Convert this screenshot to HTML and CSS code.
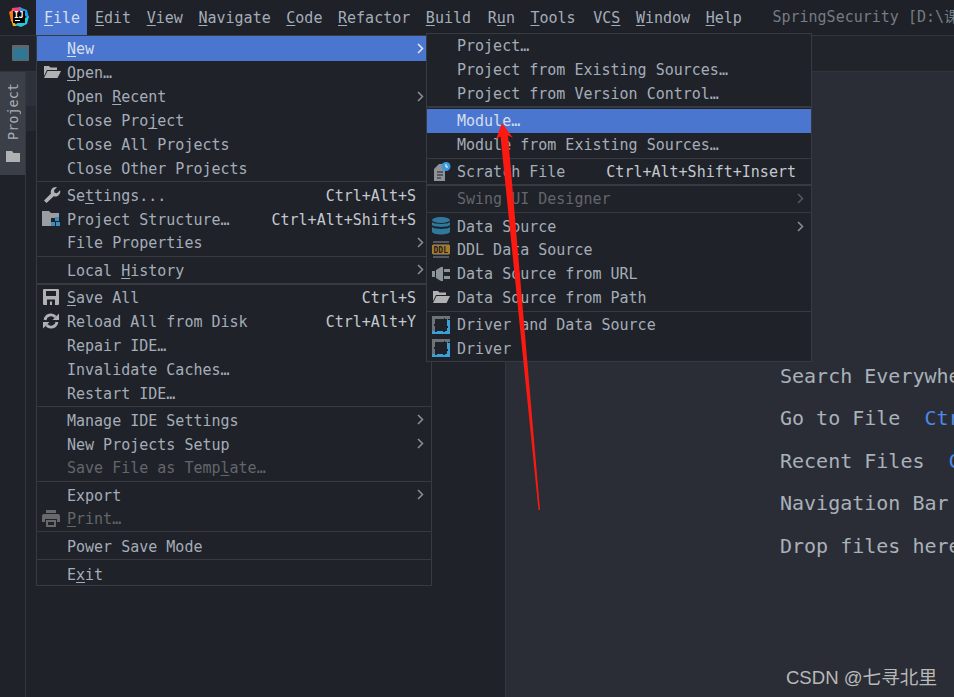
FILE: index.html
```html
<!DOCTYPE html>
<html lang="en">
<head>
<meta charset="utf-8">
<title>SpringSecurity</title>
<link rel="stylesheet" href="styles.css">
</head>
<body>
<div class="app">
  <header class="menubar">
    <div class="logo">
      <svg width="20" height="20" viewBox="0 0 20 20">
        <polygon points="3,1 12,0 12,6 2,9" fill="#fc3a84"/>
        <polygon points="10,0 18,3 20,11 14,8" fill="#1c9ee6"/>
        <polygon points="0,5 5,2 7,16 2,14" fill="#f97a12"/>
        <polygon points="2,12 8,19 4,19" fill="#fdb60d"/>
        <polygon points="14,12 20,9 18,17 12,20 6,18" fill="#28c8dc"/>
        <rect x="4" y="4" width="12" height="12" fill="#000"/>
        <rect x="6" y="13" width="5" height="1" fill="#fff"/>
      </svg>
      <span class="logo-text">IJ</span>
    </div>
    <nav class="menus">
      <span class="menu active"><u>F</u>ile</span>
      <span class="menu"><u>E</u>dit</span>
      <span class="menu"><u>V</u>iew</span>
      <span class="menu"><u>N</u>avigate</span>
      <span class="menu"><u>C</u>ode</span>
      <span class="menu"><u>R</u>efactor</span>
      <span class="menu wide"><u>B</u>uild</span>
      <span class="menu">R<u>u</u>n</span>
      <span class="menu wider"><u>T</u>ools</span>
      <span class="menu"><span>VC<u>S</u></span></span>
      <span class="menu"><u>W</u>indow</span>
      <span class="menu"><u>H</u>elp</span>
    </nav>
    <span class="title">SpringSecurity [D:\课程</span>
  </header>

  <div class="toolbar">
    <svg class="tool-icon" width="17" height="16" viewBox="0 0 17 16">
      <rect x="0" y="0" width="17" height="16" rx="1" fill="#5c676e"/>
      <rect x="1.500" y="3.500" width="14" height="11" fill="#2f7895"/>
    </svg>
  </div>

  <div class="main">
    <aside class="strip">
      <div class="tab">
        <span class="tab-label">Project</span>
        <svg width="14" height="11" viewBox="0 0 14 11"><path d="M0 0h6l1.500 2H14v9H0z" fill="#afb1b3"/></svg>
      </div>
    </aside>
    <section class="panel">
      <div class="patch-a"></div>
      <div class="patch-b"></div>
    </section>
    <section class="editor">
      <p class="hint">Search Everywhere</p>
      <p class="hint">Go to File  <span class="key">Ctrl+Shift+N</span></p>
      <p class="hint">Recent Files  <span class="key">Ctrl+E</span></p>
      <p class="hint">Navigation Bar  <span class="key">Alt+Home</span></p>
      <p class="hint">Drop files here to open them</p>
      <div class="watermark">CSDN @七寻北里</div>
    </section>
  </div>

  <div class="popup file-menu">
    <div class="item selected"><span class="ico"></span><span class="label"><u>N</u>ew</span><svg class="chev" width="7" height="11" viewBox="0 0 7 11"><path d="M1 1l4.500 4.500L1 10" fill="none" stroke="#e4e9f2" stroke-width="1.500"/></svg></div>
    <div class="item"><span class="ico"><svg width="18" height="14" viewBox="0 0 18 14"><path d="M1 1h5l1.500 1.500H14V5H4L1 11zM4.500 6H18l-3.500 7H1z" fill="#afb1b3"/></svg></span><span class="label"><u>O</u>pen…</span></div>
    <div class="item"><span class="ico"></span><span class="label">Open <u>R</u>ecent</span><svg class="chev" width="7" height="11" viewBox="0 0 7 11"><path d="M1 1l4.500 4.500L1 10" fill="none" stroke="#8b8e93" stroke-width="1.500"/></svg></div>
    <div class="item"><span class="ico"></span><span class="label">Close Pro<u>j</u>ect</span></div>
    <div class="item"><span class="ico"></span><span class="label">Close All Projects</span></div>
    <div class="item"><span class="ico"></span><span class="label">Close Other Projects</span></div>
    <div class="sep"></div>
    <div class="item"><span class="ico"><svg width="18" height="18" viewBox="0 0 18 18"><path d="M1 14.500L8 7.500C7 4.500 9 1 13 1l1 .300-3 3 .500 2.500 2.500.500 3-3 .300 1c0 4-3.500 6-6.500 5L3.500 17z" fill="#afb1b3"/></svg></span><span class="label">Se<u>t</u>tings...</span><span class="short">Ctrl+Alt+S</span></div>
    <div class="item"><span class="ico pull"><svg width="18" height="17" viewBox="0 0 18 17"><path d="M0 1h7l2 2h8v5H9v8H0z" fill="#9a9da1"/><rect x="13" y="7" width="4" height="4" fill="#3c8dc0"/><rect x="9" y="12" width="4" height="4" fill="#3c8dc0"/><rect x="14" y="12" width="4" height="4" fill="#3c8dc0"/></svg></span><span class="label">Project Structure…</span><span class="short">Ctrl+Alt+Shift+S</span></div>
    <div class="item"><span class="ico"></span><span class="label">File Properties</span><svg class="chev" width="7" height="11" viewBox="0 0 7 11"><path d="M1 1l4.500 4.500L1 10" fill="none" stroke="#8b8e93" stroke-width="1.500"/></svg></div>
    <div class="sep"></div>
    <div class="item"><span class="ico"></span><span class="label">Local <u>H</u>istory</span><svg class="chev" width="7" height="11" viewBox="0 0 7 11"><path d="M1 1l4.500 4.500L1 10" fill="none" stroke="#8b8e93" stroke-width="1.500"/></svg></div>
    <div class="sep thick"></div>
    <div class="item"><span class="ico"><svg width="16" height="16" viewBox="0 0 16 16"><path fill-rule="evenodd" d="M1 0h14a1 1 0 0 1 1 1v14a1 1 0 0 1-1 1H1a1 1 0 0 1-1-1V1a1 1 0 0 1 1-1zM3 2v5h10V2zM4 10.500V16h8v-5.500zM7 12.500h2V16H7z" fill="#afb1b3"/></svg></span><span class="label"><u>S</u>ave All</span><span class="short">Ctrl+S</span></div>
    <div class="item"><span class="ico"><svg width="16" height="16" viewBox="0 0 16 16"><path d="M2 7A6 6 0 0 1 12.500 4M14 9A6 6 0 0 1 3.500 12" fill="none" stroke="#afb1b3" stroke-width="2.800"/><path d="M9.500 7H16V.500zM6.500 9H0v6.500z" fill="#afb1b3"/></svg></span><span class="label">Reload All from Disk</span><span class="short">Ctrl+Alt+Y</span></div>
    <div class="item"><span class="ico"></span><span class="label">Repair IDE…</span></div>
    <div class="item"><span class="ico"></span><span class="label">Invalidate Caches…</span></div>
    <div class="item"><span class="ico"></span><span class="label">Restart IDE…</span></div>
    <div class="sep"></div>
    <div class="item"><span class="ico"></span><span class="label">Manage IDE Settings</span><svg class="chev" width="7" height="11" viewBox="0 0 7 11"><path d="M1 1l4.500 4.500L1 10" fill="none" stroke="#8b8e93" stroke-width="1.500"/></svg></div>
    <div class="item"><span class="ico"></span><span class="label">New Projects Setup</span><svg class="chev" width="7" height="11" viewBox="0 0 7 11"><path d="M1 1l4.500 4.500L1 10" fill="none" stroke="#8b8e93" stroke-width="1.500"/></svg></div>
    <div class="item off"><span class="ico"></span><span class="label">Save File as Temp<u>l</u>ate…</span></div>
    <div class="sep"></div>
    <div class="item"><span class="ico"></span><span class="label">Export</span><svg class="chev" width="7" height="11" viewBox="0 0 7 11"><path d="M1 1l4.500 4.500L1 10" fill="none" stroke="#8b8e93" stroke-width="1.500"/></svg></div>
    <div class="item off"><span class="ico pull"><svg width="18" height="17" viewBox="0 0 18 17"><rect x="4" y="0" width="10" height="3" fill="#67696c"/><path d="M2 4h14a2 2 0 0 1 2 2v6h-3V9H3v3H0V6a2 2 0 0 1 2-2z" fill="#67696c"/><path d="M4 10h10v7H4zM6 12v3h6v-3z" fill="#67696c" fill-rule="evenodd"/></svg></span><span class="label"><u>P</u>rint…</span></div>
    <div class="sep"></div>
    <div class="item"><span class="ico"></span><span class="label">Power Save Mode</span></div>
    <div class="sep last"></div>
    <div class="item"><span class="ico"></span><span class="label">E<u>x</u>it</span></div>
  </div>

  <div class="popup sub-menu">
    <div class="item"><span class="ico"></span><span class="label">Project…</span></div>
    <div class="item"><span class="ico"></span><span class="label">Project from Existing Sources…</span></div>
    <div class="item"><span class="ico"></span><span class="label">Project from Version Control…</span></div>
    <div class="sep thick"></div>
    <div class="item selected"><span class="ico"></span><span class="label">Module…</span></div>
    <div class="item"><span class="ico"></span><span class="label">Module from Existing Sources…</span></div>
    <div class="sep"></div>
    <div class="item"><span class="ico"><svg width="19" height="19" viewBox="-2 0 19 19"><path d="M5 2h6v17H0V7z" fill="#8f9296"/><path d="M3 10h6M3 13h6M3 16h4" stroke="#1f2229" stroke-width="1"/><circle cx="12" cy="4.500" r="4.500" fill="#3b9ad9"/><path d="M12 2v3h2" fill="none" stroke="#fff" stroke-width="1"/></svg></span><span class="label">Scratch File</span><span class="short">Ctrl+Alt+Shift+Insert</span></div>
    <div class="sep thick"></div>
    <div class="item off"><span class="ico"></span><span class="label">Swing UI Designer</span><svg class="chev" width="7" height="11" viewBox="0 0 7 11"><path d="M1 1l4.500 4.500L1 10" fill="none" stroke="#55585d" stroke-width="1.500"/></svg></div>
    <div class="sep"></div>
    <div class="item"><span class="ico"><svg width="18" height="18" viewBox="0 0 18 18"><ellipse cx="9" cy="3" rx="9" ry="3" fill="#2f7a9c"/><path d="M0 5c2 2.500 16 2.500 18 0v3c-2 2.500-16 2.500-18 0zM0 10c2 2.500 16 2.500 18 0v4.500c0 4-18 4-18 0z" fill="#2f7a9c"/></svg></span><span class="label">Data Source</span><svg class="chev" width="7" height="11" viewBox="0 0 7 11"><path d="M1 1l4.500 4.500L1 10" fill="none" stroke="#8b8e93" stroke-width="1.500"/></svg></div>
    <div class="item"><span class="ico"><svg width="18" height="17" viewBox="0 0 18 17"><rect x="1" y="0" width="16" height="17" fill="#55585c"/><rect x="1" y="2" width="16" height="1" fill="#1f2229"/><rect x="1" y="14" width="16" height="1" fill="#1f2229"/><rect x="0" y="4" width="18" height="9" fill="#a97c2c"/></svg><span class="ddl">DDL</span></span><span class="label">DDL Data Source</span></div>
    <div class="item"><span class="ico"><svg width="18" height="14" viewBox="0 0 18 14"><path d="M0 4h3v6H0z" fill="#8d9499"/><path d="M4 3l5-3h2v14H9L4 11z" fill="#8d9499"/><rect x="12" y="2" width="6" height="3" fill="#8d9499"/><rect x="12" y="9" width="6" height="3" fill="#8d9499"/></svg></span><span class="label">Data Source from URL</span></div>
    <div class="item"><span class="ico"><svg width="18" height="14" viewBox="0 0 18 14"><path d="M1 1h5l1.500 1.500H14V5H4L1 11zM4.500 6H18l-3.500 7H1z" fill="#afb1b3"/></svg></span><span class="label">Data Source from Path</span></div>
    <div class="sep"></div>
    <div class="item"><span class="ico"><svg width="18" height="18" viewBox="0 0 18 18"><path d="M0 0h18v3h-2v1h-1V3h-2V2h-1v1H3v1H0z" fill="#6c7378"/><path d="M0 4h3v4h-1v2h1v5H0z" fill="#6c7378"/><path d="M15 4h3v14H0v-3h3v1h2v-1h6v1h2v-1h2v-3h1v-2h-1z" fill="#39a0d8"/></svg></span><span class="label">Driver and Data Source</span></div>
    <div class="item"><span class="ico"><svg width="18" height="18" viewBox="0 0 18 18"><path d="M0 0h18v3h-2v1h-1V3h-2V2h-1v1H3v1H0z" fill="#6c7378"/><path d="M0 4h3v4h-1v2h1v5H0z" fill="#6c7378"/><path d="M15 4h3v14H0v-3h3v1h2v-1h6v1h2v-1h2v-3h1v-2h-1z" fill="#39a0d8"/></svg></span><span class="label">Driver</span></div>
  </div>

  <svg class="arrow" width="954" height="697" viewBox="0 0 954 697">
    <polygon points="502,123 513,138 508,135.500 540,510 538.500,510 500.500,136.500 496,139" fill="#fb1a12"/>
  </svg>
</div>
</body>
</html>
```
FILE: styles.css
```css
* { box-sizing: border-box; }
html, body { margin: 0; padding: 0; background: #1f2229; }
body { font-family: "DejaVu Sans Mono", "Noto Sans CJK SC", monospace; font-size: 15px; color: #a5adb8; }
u { text-decoration-thickness: 1px; text-underline-offset: 2px; text-decoration-skip-ink: none; }

.app { position: relative; width: 954px; height: 697px; overflow: hidden; display: flex; flex-direction: column; }

.menubar { height: 36px; flex: none; display: flex; align-items: stretch; background: #1e2128; border-bottom: 1px solid #32353c; white-space: nowrap; overflow: hidden; }
.logo { position: relative; width: 36px; flex: none; padding: 7px 0 0 9px; }
.logo svg { display: block; }
.logo-text { position: absolute; left: 14px; top: 11px; font-size: 8px; font-weight: bold; color: #fff; line-height: 9px; }
.menus { display: flex; }
.menu { height: 35px; padding: 0 7.600px 0 8px; line-height: 36px; }
.menu.active { padding-right: 6.900px; background: #4b76cf; color: #d5dff0; }
.menu.wide { padding-right: 8.800px; }
.menu.wider { padding-right: 9.600px; }
.title { margin-left: 23px; line-height: 35px; color: #777b82; font-size: 15px; }

.toolbar { height: 36px; flex: none; display: flex; align-items: center; padding-left: 12px; background: #21242b; border-bottom: 1px solid #32353c; }
.tool-icon { display: block; margin-bottom: 2px; }

.main { flex: 1; display: flex; min-height: 0; }
.strip { width: 26px; flex: none; background: #1f2229; border-right: 1px solid #34373e; }
.tab { height: 103px; display: flex; flex-direction: column; align-items: center; gap: 8px; padding-top: 11px; background: #3b3f47; color: #a8adb3; }
.tab-label { writing-mode: vertical-rl; transform: rotate(180deg); font-size: 13.500px; line-height: 14px; padding-top: 3px; }
.tab svg { display: block; }
.panel { width: 480px; flex: none; background: #1f2229; border-right: 1px solid #34373e; }
.patch-a { height: 34px; background: #2d3139; }
.patch-b { height: 25px; background: #262930; }
.editor { flex: 1; min-width: 0; position: relative; background: #2a2d35; padding: 290.700px 0 0 274px; overflow: hidden; }
.hint { margin: 0 0 16.500px; font-size: 20px; line-height: 26px; color: #a9b1ba; white-space: pre; }
.key { color: #4a88e8; }
.watermark { position: absolute; right: 17px; bottom: 6px; font-family: "Liberation Sans", "Noto Sans CJK SC", sans-serif; font-size: 18.600px; line-height: 26px; color: #b9b9b9; white-space: nowrap; }

.popup { position: absolute; background: #1f2229; border: 1px solid #373a41; display: flex; flex-direction: column; }
.file-menu { left: 36px; top: 35px; width: 396px; height: 551px; }
.file-menu .ico { padding-left: 6px; }
.file-menu .ico.pull { padding-left: 5px; }
.file-menu .selected { height: 24.600px; }
.sub-menu { left: 426px; top: 33px; width: 386px; height: 329px; }
.item { height: 23.800px; flex: none; display: flex; align-items: center; padding-right: 15px; white-space: nowrap; color: #a5adb8; }
.item.selected { background: #4b76cf; color: #d5dff0; }
.item.off { color: #63666b; }
.ico { position: relative; width: 30px; flex: none; height: 18px; padding-left: 5px; display: flex; align-items: center; }
.ico svg { display: block; flex: none; }
.ddl { position: absolute; left: 6.500px; top: 5px; font-size: 8px; line-height: 9px; font-weight: bold; color: #1f2229; }
.label { flex: 1; padding-top: 2px; }
.sub-menu .label, .sub-menu .short { padding-top: 1px; }
.short { color: #c4c9cf; padding-top: 2px; }
.chev { margin-right: -8px; display: block; flex: none; }
.sep { height: 3.400px; flex: none; display: flex; align-items: center; }
.sep.last { height: 4.200px; }
.sep::before { content: ""; display: block; width: 100%; height: 1px; background: #373a41; }
.sep.thick::before { height: 2px; }
.file-menu .sep.thick { height: 4px; }

.arrow { position: absolute; left: 0; top: 0; pointer-events: none; }
```
